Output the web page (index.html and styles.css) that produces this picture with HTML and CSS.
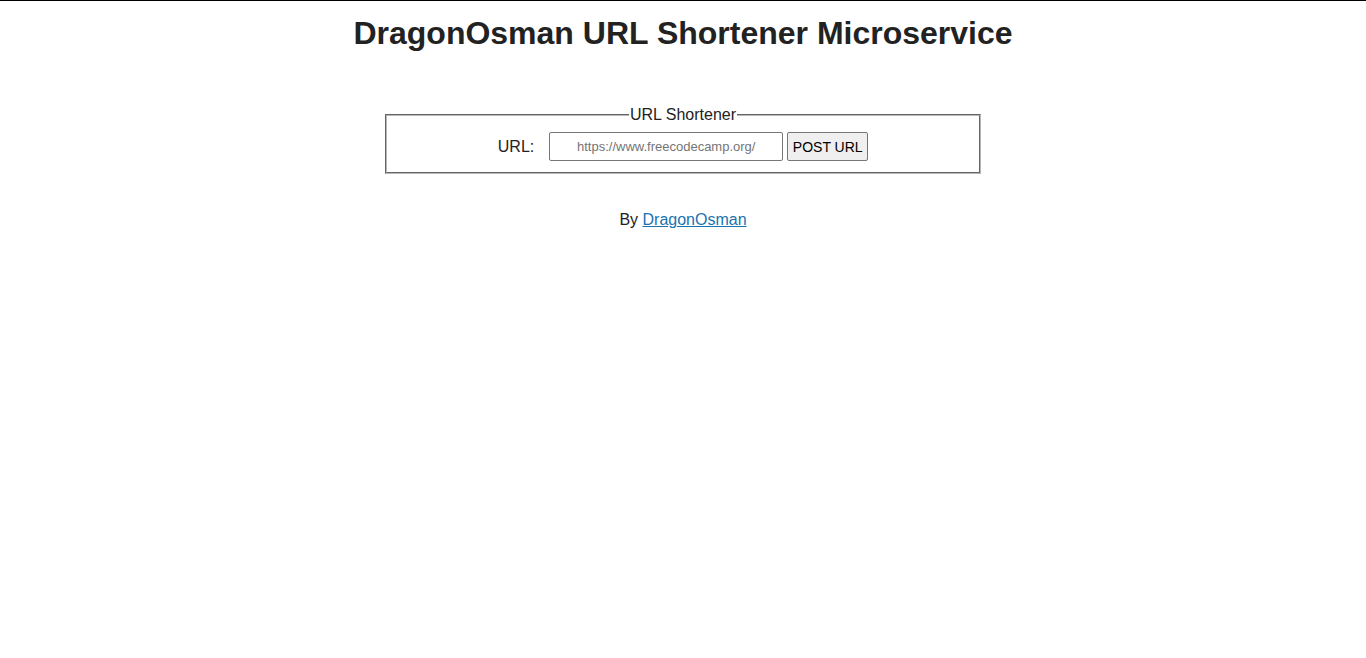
FILE: index.html
```html
<!DOCTYPE html>
<html>
<head>
<meta charset="utf-8">
<title>URL Shortener</title>
<link rel="stylesheet" href="styles.css">
</head>
<body>
<div class="page">
  <h1 class="title">DragonOsman URL Shortener Microservice</h1>
  <form class="shortener">
    <fieldset class="box">
      <legend class="legend">URL Shortener</legend>
      <label class="label" for="url_input">URL:</label>
      <input class="url-input" id="url_input" type="text" placeholder="https://www.freecodecamp.org/">
      <button class="submit" type="button">POST URL</button>
    </fieldset>
  </form>
  <p class="byline">By <a class="author" href="#">DragonOsman</a></p>
</div>
</body>
</html>
```

FILE: styles.css
```css
html, body {
  margin: 0;
  padding: 0;
  background: #fff;
}
body {
  border-top: 1px solid #000;
  font-family: "Liberation Sans", Arial, sans-serif;
  color: #222;
}
.page {
  display: flex;
  flex-direction: column;
  align-items: center;
}
.title {
  font-size: 32px;
  font-weight: bold;
  margin: 14px 0 0;
  line-height: 37px;
}
.shortener {
  margin-top: 54px;
}
.box {
  width: 596px;
  box-sizing: border-box;
  border: 2px groove #b8b8b8;
  margin: 0;
  padding: 8px 0 11px;
  display: flex;
  justify-content: center;
  align-items: center;
}
.legend {
  font-size: 16px;
  padding: 0 1px;
  margin: 0 auto;
}
.label {
  font-size: 16px;
  margin-right: 15px;
}
.url-input {
  width: 234px;
  height: 29px;
  box-sizing: border-box;
  border: 1px solid #767676;
  border-radius: 2px;
  text-align: center;
  font-family: "Liberation Sans", Arial, sans-serif;
  font-size: 13px;
  padding: 0 4px;
  margin: 0 4px 0 0;
}
.url-input::placeholder {
  color: #757575;
}
.submit {
  height: 29px;
  width: 81px;
  box-sizing: border-box;
  border: 1px solid #767676;
  border-radius: 2px;
  background: #efefef;
  font-family: "Liberation Sans", Arial, sans-serif;
  font-size: 14px;
  color: #000;
  padding: 0;
  margin: 0;
}
.byline {
  font-size: 16px;
  margin: 37px 0 0;
}
.author {
  color: #1a73b0;
}
```
